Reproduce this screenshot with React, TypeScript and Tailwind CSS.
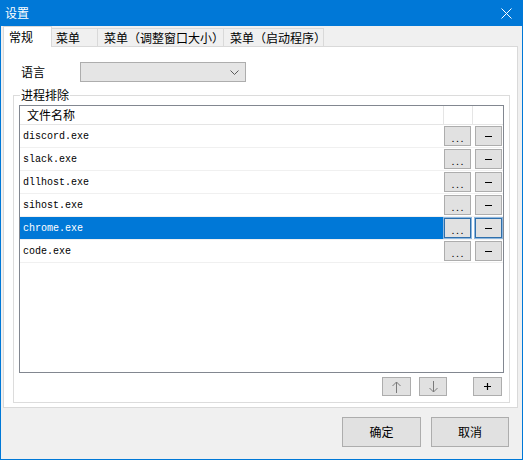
import React from "react";

const files = ["discord.exe", "slack.exe", "dllhost.exe", "sihost.exe", "chrome.exe", "code.exe"];
const selectedIndex = 4;

const tabs = [
  { label: "菜单", width: "w-[46px]", pad: "pl-[4px]" },
  { label: "菜单（调整窗口大小）", width: "w-[126px]", pad: "pl-[6px]" },
  { label: "菜单（启动程序）", width: "w-[100px]", pad: "pl-[6px]" },
];

const RowButton = ({ children, active }: { children: React.ReactNode; active: boolean }) => (
  <button
    type="button"
    className={`ml-[1px] mt-[1px] flex h-[20px] w-[27px] items-center justify-center border bg-[#e1e1e1] text-[11px] leading-none text-black ${
      active ? "border-[#2f6fab] outline outline-1 outline-[#8fb8df]" : "border-[#adadad]"
    }`}
  >
    {children}
  </button>
);

const SmallButton = ({ children, width }: { children: React.ReactNode; width: string }) => (
  <button
    type="button"
    className={`flex h-[19px] ${width} items-center justify-center border border-[#adadad] bg-[#e1e1e1]`}
  >
    {children}
  </button>
);

export default function App() {
  return (
    <div className="flex h-[460px] w-[523px] flex-col bg-[#f0f0f0] font-['Noto_Sans_CJK_SC','Noto_Sans',sans-serif] text-[12px] text-black">
      {/* title bar */}
      <div className="flex h-[26px] shrink-0 items-center justify-between bg-[#0078d7] pl-[5px] pr-[11px] text-white">
        <span className="leading-none">设置</span>
        <svg width="11" height="11" viewBox="0 0 11 11">
          <path d="M0.5 0.5 L10.5 10.5 M10.5 0.5 L0.5 10.5" stroke="white" strokeWidth="1" />
        </svg>
      </div>

      <div className="flex flex-1 flex-col border-x border-b border-[#0078d7]">
        <div className="pl-[2px] pr-[4px]">
          {/* tabs */}
          <div className="flex h-[20px] items-end">
            <div className="relative z-10 -mb-px flex h-[21px] w-[49px] items-start border-x border-t border-[#d9d9d9] bg-white pl-[5px] pt-[1px] leading-[17px]">
              常规
            </div>
            {tabs.map((t) => (
              <div
                key={t.label}
                className={`flex h-[18px] ${t.width} items-center border-r border-t border-[#d9d9d9] bg-[#f0f0f0] ${t.pad} leading-none`}
              >
                {t.label}
              </div>
            ))}
          </div>

          {/* tab page */}
          <div className="h-[362px] border border-[#d9d9d9] bg-white">
            <div className="mt-[15px] flex items-center pl-[17px]">
              <span className="w-[59px] leading-none">语言</span>
              <div className="flex h-[20px] w-[166px] items-center justify-end border border-[#adadad] bg-[#e5e5e5] pr-[6px]">
                <svg width="9" height="5" viewBox="0 0 9 5">
                  <path d="M0.5 0.5 L4.5 4.5 L8.5 0.5" fill="none" stroke="#5a5a5a" strokeWidth="1" />
                </svg>
              </div>
            </div>

            {/* group box */}
            <div className="relative ml-[9px] mt-[13px] h-[308px] w-[497px] border border-[#dcdcdc] px-[5px] pt-[9px]">
              <span className="absolute left-[6px] top-[-9px] bg-white px-[1px] leading-[16px]">进程排除</span>

              <div className="h-[268px] w-[485px] border border-[#828790] bg-white">
                {/* header */}
                <div className="flex h-[19px] border-b border-[#e5e5e5]">
                  <div className="w-[424px] border-r border-[#e5e5e5] pl-[7px] leading-[18px]">文件名称</div>
                  <div className="w-[29px] border-r border-[#e5e5e5]" />
                  <div className="w-[30px]" />
                </div>

                {files.map((f, i) => {
                  const active = i === selectedIndex;
                  return (
                    <div key={f} className="flex h-[23px] border-b border-[#f0f0f0]">
                      <div
                        className={`flex w-[423px] items-center pl-[3px] font-['Liberation_Mono',monospace] text-[10px] ${
                          active ? "bg-[#0078d7] text-white" : ""
                        }`}
                      >
                        {f}
                      </div>
                      <div className="w-[30px]">
                        <RowButton active={active}>
                          <span className="tracking-[2px] pl-[2px] pt-[5px] text-[9px]">...</span>
                        </RowButton>
                      </div>
                      <div className="w-[30px] pl-[1px]">
                        <RowButton active={active}>
                          <span className="block h-px w-[7px] bg-black" />
                        </RowButton>
                      </div>
                    </div>
                  );
                })}
              </div>

              {/* list actions */}
              <div className="mt-[4px] flex">
                <div className="ml-[363px]">
                  <SmallButton width="w-[29px]">
                    <svg width="9" height="12" viewBox="0 0 9 12">
                      <path d="M4.5 1 V12 M0.5 5 L4.5 1 L8.5 5" fill="none" stroke="#7a7a7a" strokeWidth="1" />
                    </svg>
                  </SmallButton>
                </div>
                <div className="ml-[8px]">
                  <SmallButton width="w-[28px]">
                    <svg width="9" height="12" viewBox="0 0 9 12">
                      <path d="M4.5 0 V11 M0.5 7 L4.5 11 L8.5 7" fill="none" stroke="#7a7a7a" strokeWidth="1" />
                    </svg>
                  </SmallButton>
                </div>
                <div className="ml-[26px]">
                  <SmallButton width="w-[29px]">
                    <svg width="7" height="7" viewBox="0 0 7 7">
                      <path d="M3.5 0 V7 M0 3.5 H7" stroke="black" strokeWidth="1.2" />
                    </svg>
                  </SmallButton>
                </div>
              </div>
            </div>
          </div>
        </div>

        {/* dialog buttons */}
        <div className="mt-[9px] flex justify-end gap-[10px] pr-[13px]">
          <button type="button" className="h-[30px] w-[79px] border border-[#adadad] bg-[#e1e1e1] text-[12px]">
            确定
          </button>
          <button type="button" className="h-[30px] w-[78px] border border-[#adadad] bg-[#e1e1e1] text-[12px]">
            取消
          </button>
        </div>
      </div>
    </div>
  );
}
